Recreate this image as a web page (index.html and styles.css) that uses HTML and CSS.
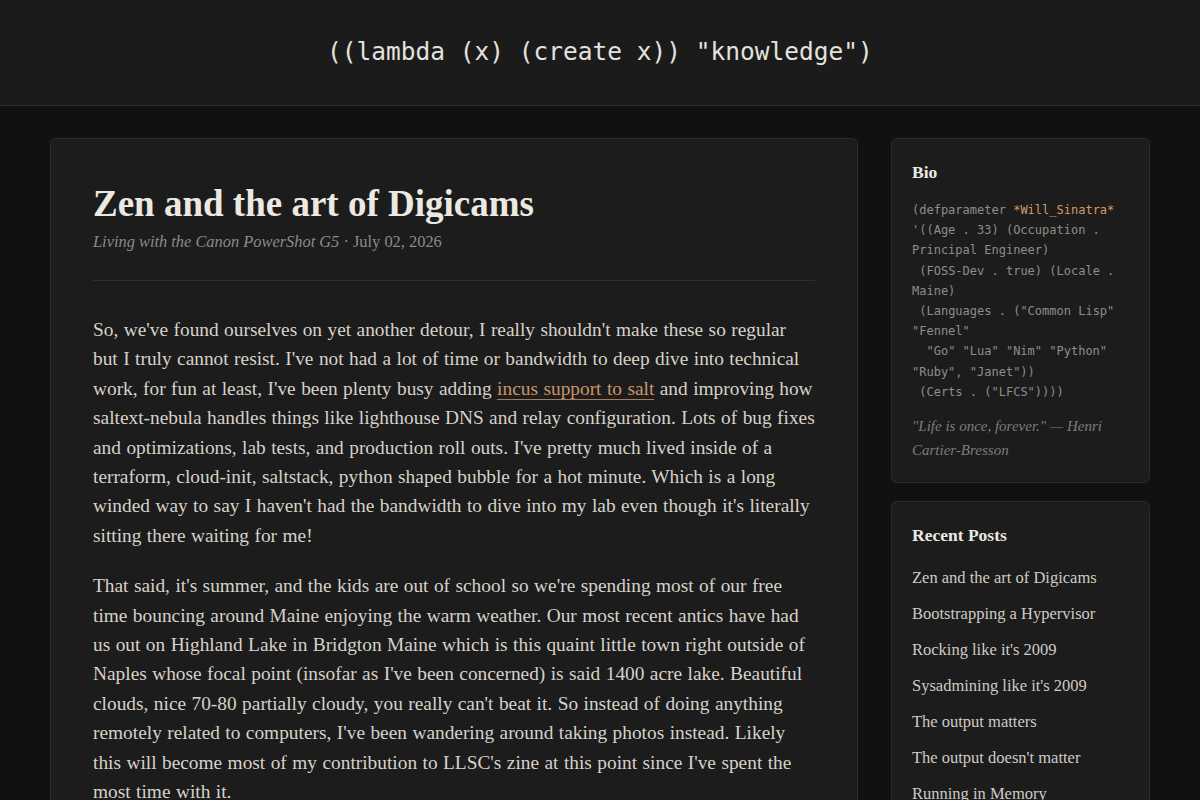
FILE: index.html
```
<!DOCTYPE html>
<html lang="en">
<head>
<meta charset="utf-8">
<title>Zen and the art of Digicams</title>
<link rel="stylesheet" href="styles.css">
</head>
<body>
<header class="site-header">
  <h1 class="site-title">((lambda (x) (create x)) "knowledge")</h1>
</header>
<div class="layout">
  <main class="post">
    <div class="post-head">
      <h2 class="post-title">Zen and the art of Digicams</h2>
      <p class="post-meta"><em>Living with the Canon PowerShot G5</em> · July 02, 2026</p>
    </div>
    <div class="post-body">
      <p>So, we've found ourselves on yet another detour, I really shouldn't make these so regular but I truly cannot resist. I've not had a lot of time or bandwidth to deep dive into technical work, for fun at least, I've been plenty busy adding <a href="#">incus support to salt</a> and improving how saltext-nebula handles things like lighthouse DNS and relay configuration. Lots of bug fixes and optimizations, lab tests, and production roll outs. I've pretty much lived inside of a terraform, cloud-init, saltstack, python shaped bubble for a hot minute. Which is a long winded way to say I haven't had the bandwidth to dive into my lab even though it's literally sitting there waiting for me!</p>
      <p>That said, it's summer, and the kids are out of school so we're spending most of our free time bouncing around Maine enjoying the warm weather. Our most recent antics have had us out on Highland Lake in Bridgton Maine which is this quaint little town right outside of Naples whose focal point (insofar as I've been concerned) is said 1400 acre lake. Beautiful clouds, nice 70-80 partially cloudy, you really can't beat it. So instead of doing anything remotely related to computers, I've been wandering around taking photos instead. Likely this will become most of my contribution to LLSC's zine at this point since I've spent the most time with it.</p>
    </div>
  </main>
  <aside class="sidebar">
    <section class="card">
      <h3 class="card-title">Bio</h3>
<pre class="bio-code">(defparameter <span class="sym">*Will_Sinatra*</span> '((Age . 33) (Occupation . Principal Engineer)
 (FOSS-Dev . true) (Locale . Maine)
 (Languages . ("Common Lisp" "Fennel"
  "Go" "Lua" "Nim" "Python" "Ruby", "Janet"))
 (Certs . ("LFCS"))))</pre>
      <p class="quote">"Life is once, forever." — Henri Cartier-Bresson</p>
    </section>
    <section class="card">
      <h3 class="card-title">Recent Posts</h3>
      <ul class="recent">
        <li><a href="#">Zen and the art of Digicams</a></li>
        <li><a href="#">Bootstrapping a Hypervisor</a></li>
        <li><a href="#">Rocking like it's 2009</a></li>
        <li><a href="#">Sysadmining like it's 2009</a></li>
        <li><a href="#">The output matters</a></li>
        <li><a href="#">The output doesn't matter</a></li>
        <li><a href="#">Running in Memory</a></li>
      </ul>
    </section>
  </aside>
</div>
</body>
</html>
```
FILE: styles.css
```
* {
  box-sizing: border-box;
}

html, body {
  margin: 0;
  padding: 0;
  background: #111111;
  color: #d6d2ca;
  font-family: "Liberation Serif", "DejaVu Serif", serif;
}

a {
  color: inherit;
  text-decoration: none;
}

/* top banner */
.site-header {
  background: #1b1b1b;
  border-bottom: 1px solid #2a2a2a;
  padding: 37px 0 38px;
  text-align: center;
}

.site-title {
  margin: 0;
  font-family: "DejaVu Sans Mono", "Liberation Mono", monospace;
  font-weight: normal;
  font-size: 24.5px;
  line-height: 30px;
  color: #e4e2de;
}

/* two-column page */
.layout {
  max-width: 1100px;
  margin: 0 auto;
  padding: 32px 0 40px;
  display: flex;
  align-items: flex-start;
  gap: 33px;
}

.post {
  flex: 0 0 808px;
  background: #1c1c1c;
  border: 1px solid #2b2b2b;
  border-radius: 6px;
  padding: 44px 42px 42px;
}

.post-head {
  border-bottom: 1px solid #2e2e2e;
  padding-bottom: 26px;
}

.post-title {
  margin: 0;
  font-size: 37px;
  line-height: 42px;
  font-weight: bold;
  color: #ece9e2;
}

.post-meta {
  margin: 5px 0 0;
  font-size: 16.4px;
  line-height: 24px;
  color: #8c8a86;
}

.post-body {
  padding-top: 34px;
}

.post-body p {
  margin: 0 0 21px;
  font-size: 19.36px;
  word-spacing: 0.6px;
  line-height: 29.4px;
  color: #d6d2ca;
}

.post-body a {
  color: #c8956b;
  border-bottom: 1px solid #a77a55;
}

/* sidebar cards */
.sidebar {
  flex: 1 1 auto;
  display: flex;
  flex-direction: column;
  gap: 18px;
}

.card {
  background: #1c1c1c;
  border: 1px solid #2b2b2b;
  border-radius: 6px;
  padding: 20px 20px 20px;
}

.card-title {
  margin: 0;
  font-size: 17.5px;
  line-height: 27px;
  font-weight: bold;
  color: #ece9e2;
}

.bio-code {
  margin: 14px 0 0;
  font-family: "DejaVu Sans Mono", "Liberation Mono", monospace;
  font-size: 12px;
  line-height: 20.2px;
  color: #8f8d89;
  white-space: pre-wrap;
}

.bio-code .sym {
  color: #d49a66;
}

.quote {
  margin: 12px 0 0;
  font-style: italic;
  font-size: 15px;
  line-height: 24px;
  color: #7f7d79;
}

.recent {
  list-style: none;
  margin: 17px 0 0;
  padding: 0;
  display: flex;
  flex-direction: column;
  gap: 12px;
}

.recent li {
  font-size: 16.5px;
  line-height: 24px;
  color: #cfcbc4;
}
```
